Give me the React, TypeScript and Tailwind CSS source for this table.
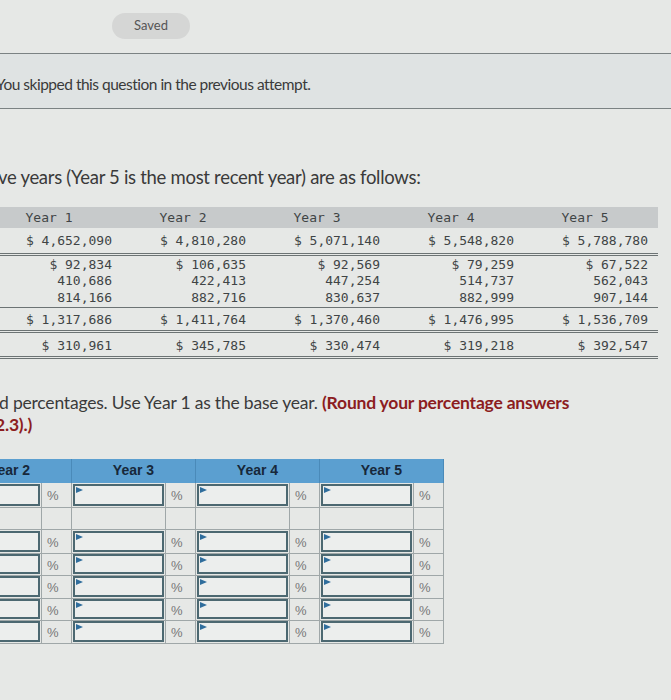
import React from 'react';

const finRows: { cells: string[]; h: string; line: string }[] = [
    { cells: ['$ 4,652,090', '$ 4,810,280', '$ 5,071,140', '$ 5,548,820', '$ 5,788,780'], h: 'h-[28px] pt-[5px]', line: 'border-b-[3px] border-double' },
    { cells: ['$ 92,834', '$ 106,635', '$ 92,569', '$ 79,259', '$ 67,522'], h: 'h-[17px] pt-[1px]', line: '' },
    { cells: ['410,686', '422,413', '447,254', '514,737', '562,043'], h: 'h-[17px]', line: '' },
    { cells: ['814,166', '882,716', '830,637', '882,999', '907,144'], h: 'h-[18px]', line: 'border-b' },
    { cells: ['$ 1,317,686', '$ 1,411,764', '$ 1,370,460', '$ 1,476,995', '$ 1,536,709'], h: 'h-[25px] pt-[4px]', line: 'border-b-[3px] border-double' },
    { cells: ['$ 310,961', '$ 345,785', '$ 330,474', '$ 319,218', '$ 392,547'], h: 'h-[26px] pt-[5px]', line: 'border-b-[3px] border-double' },
];

const Flag = () => (
    <svg className="absolute left-[1px] top-[1px]" width="7" height="7" viewBox="0 0 7 7">
        <path d="M0 0 L7 3 L0 6 Z" fill="#2f6d9c" />
    </svg>
);

const PctGroup: React.FC<{ blank?: boolean }> = ({ blank }) => (
    <>
        <div className="h-full border-r border-b border-[#9fa7a8] p-[1px]">
            {!blank && (
                <div className="relative h-full border-2 border-[#4c6871] bg-[#eceeed]">
                    <Flag />
                </div>
            )}
        </div>
        <div className="h-full border-r border-b border-[#9fa7a8] pl-[5px] pt-[3px] text-[13px] text-[#777]">
            {blank ? '' : '%'}
        </div>
    </>
);

const App: React.FC = () => {
    return (
        <div className="w-[671px] h-[700px] overflow-hidden bg-[#e6e8e6] font-['Lato',sans-serif] text-[#333]">
            <div className="h-[53px] pl-[112px] pt-[12px]">
                <span className="inline-flex h-[26px] w-[78px] items-center justify-center rounded-full bg-[#d5d6d5] text-[13px] text-[#555]">
                    Saved
                </span>
            </div>

            <div className="h-[56px] border-y border-[#7b8283] bg-[#dfe3e3] pt-[19px]">
                <p className="-ml-[4px] text-[15.5px] tracking-[-0.5px] text-[#3a3a3a]">You skipped this question in the previous attempt.</p>
            </div>

            <p className="-ml-[2px] mt-[55px] text-[18.5px] tracking-[-0.3px] text-[#3a3a3a]">
                ve years (Year 5 is the most recent year) are as follows:
            </p>

            <div className="-ml-[12px] mt-[15px] w-[670px] font-['DejaVu_Sans_Mono',monospace] text-[13px] text-[#404445]">
                <div className="grid h-[21px] grid-cols-[repeat(5,134px)] items-center bg-[#c7cacb]">
                    {['Year 1', 'Year 2', 'Year 3', 'Year 4', 'Year 5'].map((y) => (
                        <div key={y} className="pr-[12px] text-center">{y}</div>
                    ))}
                </div>
                {finRows.map((r, i) => (
                    <div key={i} className={`grid grid-cols-[repeat(5,134px)] border-[#6c7374] ${r.h} ${r.line}`}>
                        {r.cells.map((c, j) => (
                            <div key={j} className="whitespace-pre pr-[10px] text-right leading-[16px]">{c}</div>
                        ))}
                    </div>
                ))}
            </div>

            <p className="-ml-[1px] mt-[33px] text-[17.5px] leading-[22px] tracking-[-0.2px] text-[#3a3a3a]">
                d percentages. Use Year 1 as the base year. <b className="text-[#8c1d1f]">(Round your percentage answers</b>
                <br />
                <b className="-ml-[4px] text-[#8c1d1f]">2.3).)</b>
            </p>

            <div className="-ml-[52px] mt-[23px] w-[496px] font-['Liberation_Sans',sans-serif]">
                <div className="grid h-[24px] grid-cols-[repeat(4,124px)] bg-[#5b9fd0] text-[14px] font-bold text-[#17283a]">
                    {['Year 2', 'Year 3', 'Year 4', 'Year 5'].map((y) => (
                        <div key={y} className="flex items-center justify-center border-r border-[#4a8ab9]">{y}</div>
                    ))}
                </div>
                {[false, true, false, false, false, false, false].map((blank, i) => (
                    <div key={i} className={`grid grid-cols-[repeat(4,94px_30px)] ${i === 0 ? 'h-[25px]' : 'h-[22.5px]'}`}>
                        {[0, 1, 2, 3].map((k) => (
                            <PctGroup key={k} blank={blank} />
                        ))}
                    </div>
                ))}
            </div>
        </div>
    );
};

export default App;
